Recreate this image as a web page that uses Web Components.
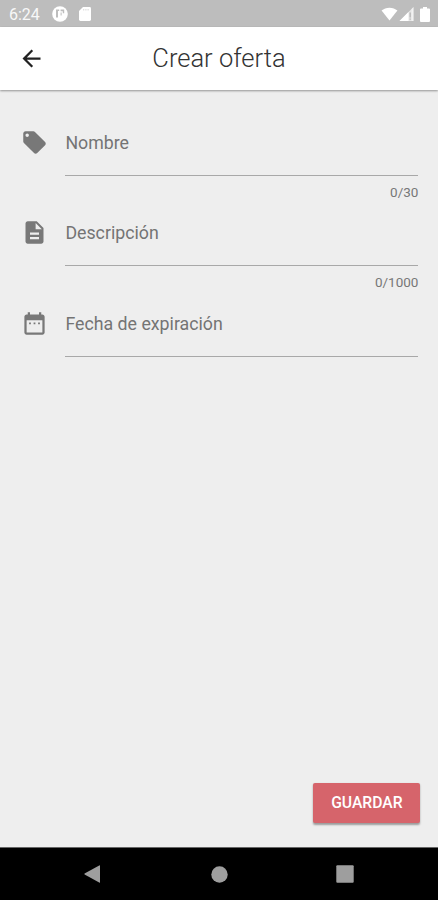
<!DOCTYPE html>
<html lang="es">
<head>
<meta charset="utf-8">
<title>Crear oferta</title>
<style>
html,body{margin:0;height:100%}
body{font-family:Roboto,"Liberation Sans",sans-serif;background:#eee;overflow:hidden}
</style>
</head>
<body>
<offer-screen></offer-screen>
<script>
const define = (name, html) => customElements.define(name, class extends HTMLElement {
  constructor() {
    super();
    this.attachShadow({mode: 'open'}).innerHTML = typeof html === 'function' ? html(this) : html;
  }
});

define('status-bar', `
<style>
:host{display:flex;box-sizing:border-box;height:27px;background:#bdbdbd;color:#fff;align-items:center;padding:1px 8px 0 9px;font-size:16px;line-height:20px}
svg{display:block;fill:#fff}
.time{width:43px;padding-top:2px;white-space:nowrap;color:#f8f8f8}
.space{flex:1}
</style>
<span class="time">6:24</span>
<svg width="16" height="16" viewBox="0 0 16 16"><circle cx="8" cy="8" r="7.8"/><path d="M4 3.600h3.200v1.400H6v6.600H4zM8.600 3.600h3.600v3.600h-1.400V5.200H8.600zM8.600 6.400h1v3h-1z" fill="#bdbdbd"/></svg>
<svg style="margin-left:11px" width="12" height="14" viewBox="0 0 12 14"><path d="M4 0h6.600Q12 0 12 1.400v11.200Q12 14 10.600 14H1.400Q0 14 0 12.600V4z"/><path d="M4.200 2h1v1.500h-1zM6.400 2h1v1.500h-1zM8.600 2h1v1.500h-1z" fill="#d8d8d8"/></svg>
<span class="space"></span>
<svg width="17" height="14" viewBox="0 0 18 14"><path d="M9 14 .6 3.400C2.800 1.500 5.800.4 9 .4s6.200 1.100 8.400 3z"/></svg>
<svg style="margin-left:1px" width="15" height="14" viewBox="0 0 15 14"><path d="M.5 14 14.500 0v14z" opacity=".6"/><path d="M.5 14 9.500 5v9z"/><path d="M14.500 0v14h-2V2z" opacity=".5"/><path d="M10.500 5.500h1.300v5h-1.300zM10.500 11.500h1.300v1.300h-1.300z" fill="#b5b5b5"/></svg>
<svg style="margin-left:6px" width="10" height="15" viewBox="0 0 10 15"><path d="M3 0h4v1.500h2q1 0 1 1V14q0 1-1 1H1q-1 0-1-1V2.500q0-1 1-1h2z"/></svg>
`);

define('app-bar', `
<style>
:host{display:grid;grid-template-columns:64px 1fr 64px;align-items:center;height:63px;background:#fff;box-shadow:0 1px 2px rgba(0,0,0,.38);z-index:1;position:relative}
svg{display:block;margin-left:18px}
h1{margin:-1px 0 0;text-align:center;font-weight:300;font-size:25.500px;line-height:30px;color:#333;white-space:nowrap}
</style>
<svg width="27" height="27" viewBox="0 0 24 24"><path fill="#222" d="M20 11H7.830l5.590-5.590L12 4l-8 8 8 8 1.410-1.410L7.830 13H20v-2z"/></svg>
<h1><slot></slot></h1>
`);

const icons = {
  tag: 'M21.41 11.58l-9-9C12.05 2.22 11.55 2 11 2H4c-1.1 0-2 .9-2 2v7c0 .55.22 1.050.59 1.420l9 9c.36.36.86.58 1.410.58.55 0 1.050-.22 1.410-.59l7-7c.37-.36.59-.86.59-1.410 0-.55-.23-1.060-.59-1.420zM5.500 7C4.670 7 4 6.330 4 5.500S4.670 4 5.500 4 7 4.670 7 5.500 6.330 7 5.500 7z',
  doc: 'M14 2H6c-1.100 0-1.990.9-1.990 2L4 20c0 1.100.89 2 1.990 2H18c1.100 0 2-.9 2-2V8l-6-6zm2 16H8v-2h8v2zm0-4H8v-2h8v2zm-3-5V3.500L18.500 9H13z',
  date: 'M8.800 11H7.200v1.700h1.600zm4 0h-1.600v1.700h1.600zm4 0h-1.600v1.700h1.600zM19 4h-1V2h-2v2H8V2H6v2H5c-1.110 0-1.990.9-1.990 2L3 20c0 1.100.89 2 2 2h14c1.100 0 2-.9 2-2V6c0-1.100-.9-2-2-2zm0 16H5V9h14v11z'
};

define('form-field', el => `
<style>
:host{display:grid;grid-template-columns:44px 1fr;height:90px}
svg{display:block;margin-top:10px}
.label{height:45px;padding-top:11px;border-bottom:1px solid #a8a8a8;font-size:17.750px;line-height:27px;color:#747474;white-space:nowrap}
.count{text-align:right;font-size:13.500px;line-height:16px;padding-top:8px;color:#777}
</style>
<svg width="27" height="27" viewBox="0 0 24 24"><path fill="#787878" d="${icons[el.getAttribute('icon')]}"/></svg>
<div><div class="label"><slot></slot></div><div class="count"><slot name="count"></slot></div></div>
`);

define('save-button', `
<style>
:host{display:flex;box-sizing:border-box;width:107px;height:40px;padding-bottom:1px;align-items:center;justify-content:center;background:#d6646b;border-radius:2px;box-shadow:0 1.500px 2px rgba(0,0,0,.35);color:#fff;font-weight:500;font-size:15.700px}
</style>
<slot></slot>
`);

define('nav-bar', `
<style>
:host{display:flex;box-sizing:border-box;height:53px;border-top:1px solid #666;background:#000;align-items:center;justify-content:space-between;padding:0 84px}
svg{display:block;fill:#9e9e9e}
svg:nth-of-type(2){margin-left:1px}
</style>
<svg width="17" height="18" viewBox="0 0 17 18"><path d="M16 .8v16.400q0 .8-.8.4L.6 9.500Q0 9 .6 8.500L15.200.4q.8-.4.8.4z"/></svg>
<svg width="17" height="17" viewBox="0 0 17 17"><circle cx="8.500" cy="8.500" r="8.200"/></svg>
<svg width="18" height="18" viewBox="0 0 18 18"><rect x=".3" y=".3" width="17.400" height="17.400" rx="1"/></svg>
`);

define('offer-screen', `
<style>
:host{display:flex;flex-direction:column;height:900px;background:#eee}
main{flex:1;display:flex;flex-direction:column;padding:29px 19.600px 24px 21.400px}
form-field:nth-of-type(3){margin-top:1px}
save-button{margin:auto -2px 0 auto}
</style>
<status-bar></status-bar>
<app-bar>Crear oferta</app-bar>
<main>
<form-field icon="tag">Nombre<span slot="count">0/30</span></form-field>
<form-field icon="doc">Descripción<span slot="count">0/1000</span></form-field>
<form-field icon="date">Fecha de expiración</form-field>
<save-button>GUARDAR</save-button>
</main>
<nav-bar></nav-bar>
`);
</script>
</body>
</html>
